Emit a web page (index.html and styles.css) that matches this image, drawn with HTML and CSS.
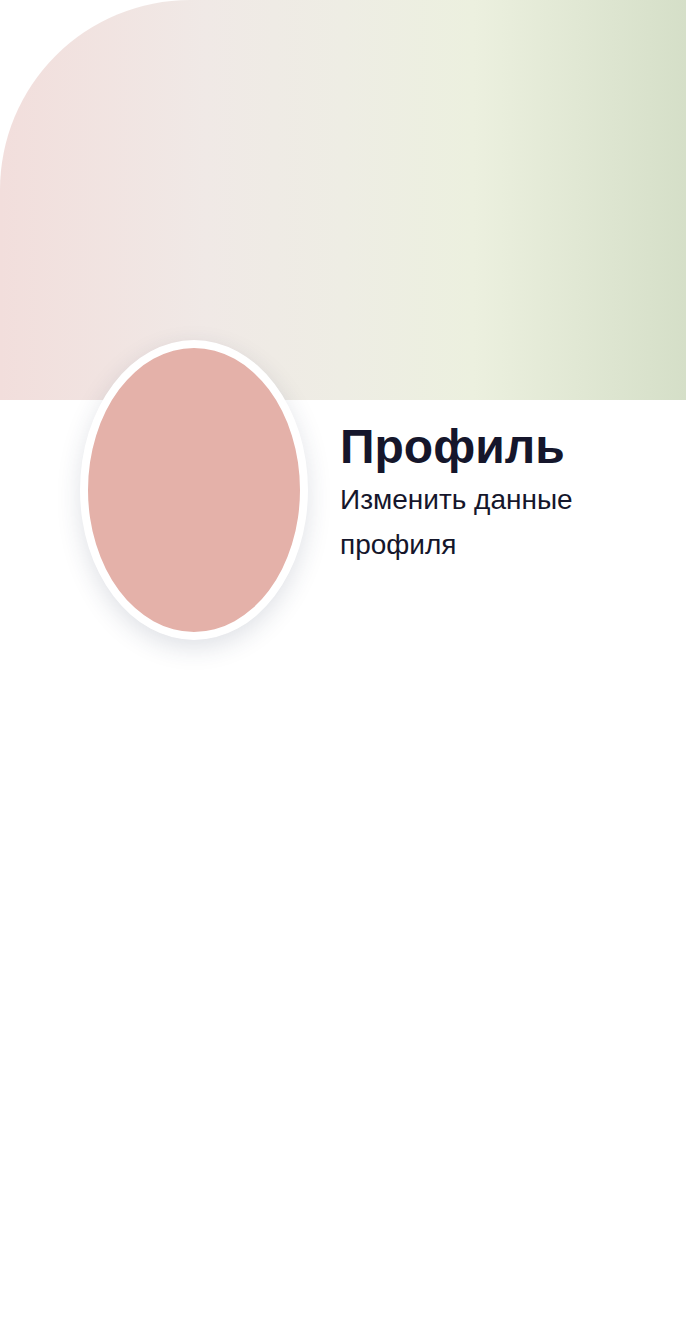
FILE: index.html
```html
<!DOCTYPE html>
<html lang="ru">
<head>
<meta charset="utf-8">
<title>Профиль</title>
<link rel="stylesheet" href="styles.css">
</head>
<body>
<div class="page">
  <div class="cover"></div>
  <div class="profile">
    <div class="avatar"></div>
    <div class="info">
      <h1 class="title">Профиль</h1>
      <p class="subtitle">Изменить данные профиля</p>
    </div>
  </div>
</div>
</body>
</html>
```

FILE: styles.css
```css
html, body {
  margin: 0;
  padding: 0;
  background: #ffffff;
}
body {
  font-family: "Liberation Sans", Arial, sans-serif;
  color: #15162b;
}
.page {
  width: 686px;
  min-height: 1334px;
}
.cover {
  height: 400px;
  border-top-left-radius: 190px;
  background: linear-gradient(90deg, #f2dedc 0%, #f0e9e6 30%, #eeede4 50%, #ecf0df 69%, #d5dfc8 100%);
}
.profile {
  display: flex;
  align-items: flex-start;
  gap: 32px;
  margin-top: -60px;
  padding-left: 80px;
}
.avatar {
  flex: none;
  width: 212px;
  height: 284px;
  border: 8px solid #ffffff;
  border-radius: 50%;
  background: #e4b1a9;
  box-shadow: 0 8px 24px rgba(40, 55, 90, 0.15);
}
.info {
  width: 300px;
  padding-top: 79px;
}
.title {
  margin: 0;
  font-size: 48px;
  line-height: 55px;
  font-weight: 700;
}
.subtitle {
  margin: 3px 0 0;
  font-size: 28px;
  line-height: 45px;
  font-weight: 400;
  width: 280px;
}
```
